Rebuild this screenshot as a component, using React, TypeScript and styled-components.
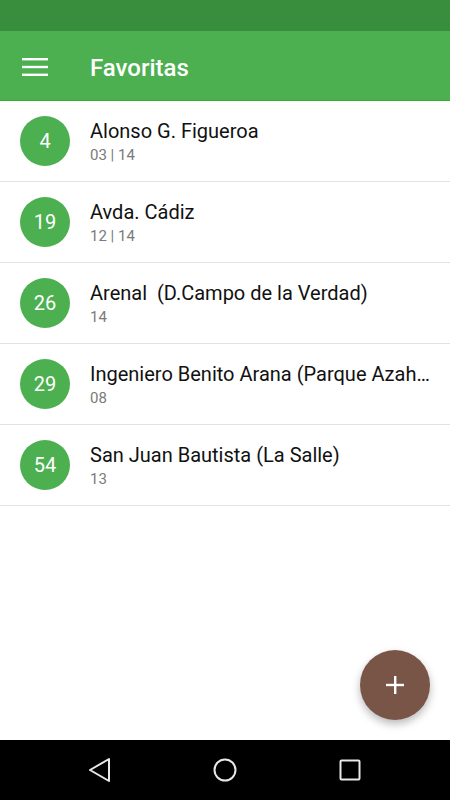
import styled, { createGlobalStyle } from 'styled-components';

const GlobalStyle = createGlobalStyle`
  html, body {
    margin: 0;
    padding: 0;
    background: #ffffff;
    font-family: Roboto, "Noto Sans", sans-serif;
  }
`;

const Screen = styled.div`
  width: 450px;
  height: 800px;
  display: flex;
  flex-direction: column;
  position: relative;
  overflow: hidden;
  background: #ffffff;
`;

const StatusBar = styled.div`
  height: 31px;
  flex: 0 0 31px;
  background: #388e3c;
`;

const AppBar = styled.div`
  height: 69px;
  flex: 0 0 69px;
  background: #4caf50;
  border-bottom: 1px solid #2fae2f;
  display: flex;
  align-items: center;
  color: #ffffff;
`;

const MenuButton = styled.div`
  width: 90px;
  display: flex;
  align-items: center;
  padding-left: 22px;
  box-sizing: border-box;
  margin-top: 2px;
`;

const Title = styled.div`
  font-size: 24px;
  font-weight: 500;
  line-height: 30px;
  margin-top: 4px;
`;

const List = styled.div`
  flex: 1;
  display: flex;
  flex-direction: column;
`;

const Row = styled.div`
  height: 80px;
  border-bottom: 1px solid #e2e2e2;
  display: flex;
  align-items: center;
  padding: 0 20px;
`;

const Badge = styled.div`
  width: 50px;
  height: 50px;
  flex: 0 0 50px;
  border-radius: 50%;
  background: #4caf50;
  color: #ffffff;
  display: flex;
  align-items: center;
  justify-content: center;
  font-size: 20px;
  margin-right: 20px;
`;

const TextBlock = styled.div`
  flex: 1;
  min-width: 0;
  display: flex;
  flex-direction: column;
  margin-top: 1px;
`;

const StopName = styled.div`
  font-size: 20px;
  color: #111111;
  white-space: pre;
  overflow: hidden;
  text-overflow: ellipsis;
  line-height: 26px;
`;

const Lines = styled.div`
  font-size: 15px;
  color: #7a7a7a;
  line-height: 20px;
  margin-top: 1px;
`;

const Fab = styled.div`
  position: absolute;
  right: 20px;
  bottom: 80px;
  width: 70px;
  height: 70px;
  border-radius: 50%;
  background: #795548;
  box-shadow: 0 4px 8px rgba(0, 0, 0, 0.28);
  display: flex;
  align-items: center;
  justify-content: center;
`;

const NavBar = styled.div`
  height: 60px;
  flex: 0 0 60px;
  background: #000000;
  display: grid;
  grid-template-columns: 125px 125px 125px;
  align-items: center;
  padding: 0 37.5px;
  box-sizing: border-box;
`;

const NavSlot = styled.div`
  display: flex;
  justify-content: center;
`;

const favorites = [
  { num: '4', name: 'Alonso G. Figueroa', lines: '03 | 14' },
  { num: '19', name: 'Avda. Cádiz', lines: '12 | 14' },
  { num: '26', name: 'Arenal  (D.Campo de la Verdad)', lines: '14' },
  { num: '29', name: 'Ingeniero Benito Arana (Parque Azahara)', lines: '08' },
  { num: '54', name: 'San Juan Bautista (La Salle)', lines: '13' },
];

export default function App() {
  return (
    <Screen>
      <GlobalStyle />
      <StatusBar />
      <AppBar>
        <MenuButton>
          <svg width="26" height="18" viewBox="0 0 26 18">
            <rect x="0" y="0" width="26" height="2.4" fill="#fff" />
            <rect x="0" y="7.8" width="26" height="2.4" fill="#fff" />
            <rect x="0" y="15.6" width="26" height="2.4" fill="#fff" />
          </svg>
        </MenuButton>
        <Title>Favoritas</Title>
      </AppBar>
      <List>
        {favorites.map((f) => (
          <Row key={f.num}>
            <Badge>{f.num}</Badge>
            <TextBlock>
              <StopName>{f.name}</StopName>
              <Lines>{f.lines}</Lines>
            </TextBlock>
          </Row>
        ))}
      </List>
      <Fab>
        <svg width="20" height="20" viewBox="0 0 20 20">
          <rect x="9" y="1" width="2.4" height="18" fill="#fff" />
          <rect x="1" y="8.8" width="18" height="2.4" fill="#fff" />
        </svg>
      </Fab>
      <NavBar>
        <NavSlot>
          <svg width="24" height="26" viewBox="0 0 24 26">
            <path d="M21 2 L2 13 L21 24 Z" fill="none" stroke="#e8e8e8" strokeWidth="2" strokeLinejoin="round" />
          </svg>
        </NavSlot>
        <NavSlot>
          <svg width="24" height="24" viewBox="0 0 24 24">
            <circle cx="12" cy="12" r="10.5" fill="none" stroke="#e8e8e8" strokeWidth="2" />
          </svg>
        </NavSlot>
        <NavSlot>
          <svg width="22" height="22" viewBox="0 0 22 22">
            <rect x="1.5" y="1.5" width="19" height="19" rx="1" fill="none" stroke="#e8e8e8" strokeWidth="2" />
          </svg>
        </NavSlot>
      </NavBar>
    </Screen>
  );
}
